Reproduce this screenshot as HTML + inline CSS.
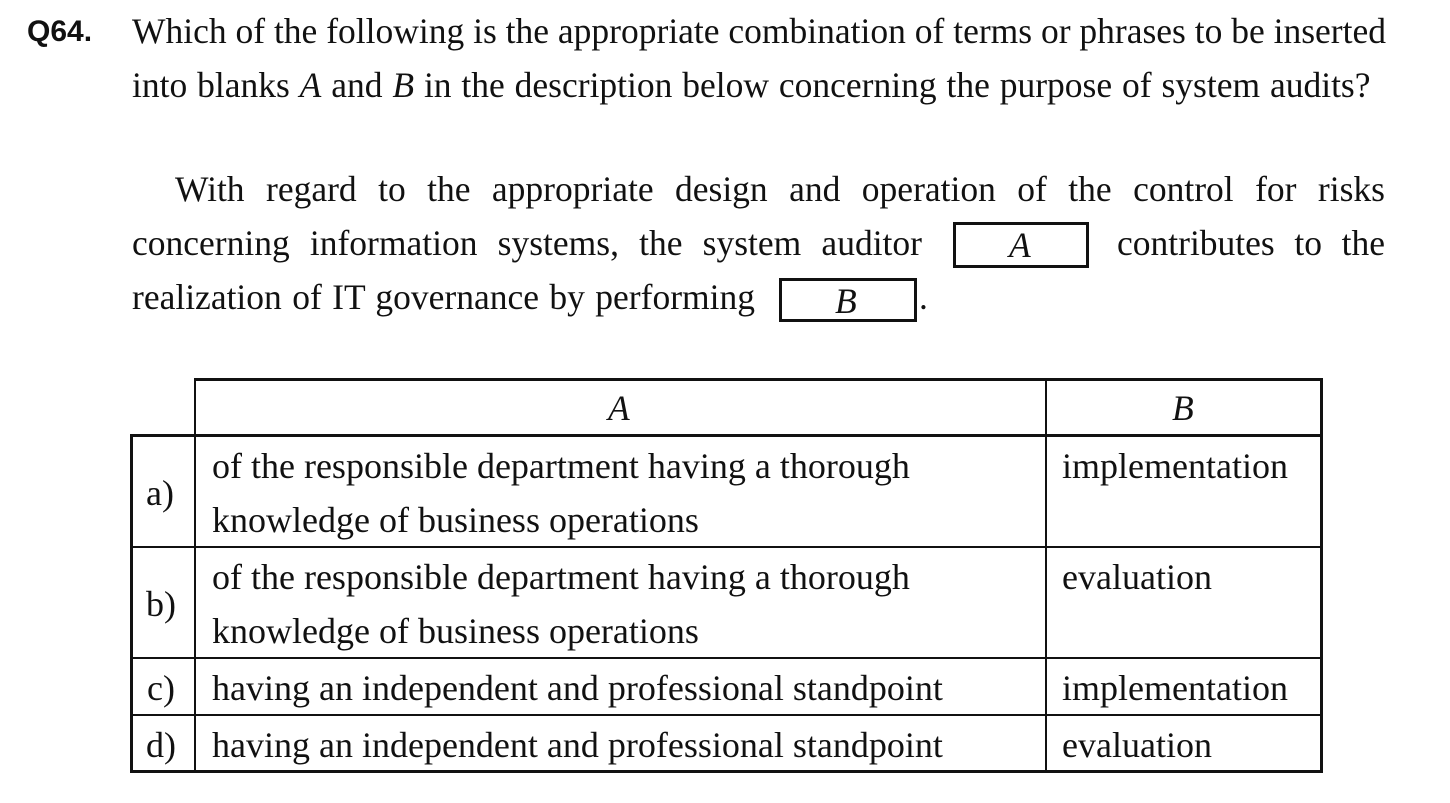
<!DOCTYPE html>
<html><head><style>
body{margin:0;width:1450px;height:803px;background:#fff;position:relative;overflow:hidden;font-family:"Liberation Serif",serif;font-size:35.5px;color:#111}
.a{position:absolute;white-space:nowrap;line-height:1}
.t{font-size:36px}
.h{position:absolute;background:#111}
.j{position:absolute;line-height:1;text-align:justify;text-align-last:justify}
</style></head><body>
<div class="a" style="left:27px;top:17px;font-family:'Liberation Sans',sans-serif;font-weight:bold;font-size:30px">Q64.</div>
<div class="a" style="left:132px;top:14px">Which of the following is the appropriate combination of terms or phrases to be inserted</div>
<div class="a" style="left:132px;top:68px;word-spacing:1px">into blanks <i>A</i> and <i>B</i> in the description below concerning the purpose of system audits?</div>

<div class="j" style="left:175px;top:172px;width:1210px">With regard to the appropriate design and operation of the control for risks</div>
<div class="j" style="left:132px;top:226px;width:790px">concerning information systems, the system auditor</div>
<div style="position:absolute;left:953px;top:222px;width:130px;height:40px;border:3px solid #111"></div>
<div class="a" style="left:1009px;top:228px"><i>A</i></div>
<div class="j" style="left:1117px;top:226px;width:268px">contributes to the</div>
<div class="j" style="left:132px;top:280px;width:623px">realization of IT governance by performing</div>
<div style="position:absolute;left:779px;top:278px;width:132px;height:38px;border:3px solid #111"></div>
<div class="a" style="left:835px;top:284px"><i>B</i></div>
<div class="a" style="left:919px;top:280px">.</div>

<div class="h" style="left:194px;top:378px;width:1129px;height:3px"></div>
<div class="h" style="left:130px;top:434px;width:1193px;height:3px"></div>
<div class="h" style="left:130px;top:546px;width:1193px;height:2px"></div>
<div class="h" style="left:130px;top:657px;width:1193px;height:2px"></div>
<div class="h" style="left:130px;top:714px;width:1193px;height:2px"></div>
<div class="h" style="left:130px;top:770px;width:1193px;height:3px"></div>
<div class="h" style="left:130px;top:434px;width:3px;height:339px"></div>
<div class="h" style="left:194px;top:378px;width:2px;height:395px"></div>
<div class="h" style="left:1045px;top:378px;width:2px;height:395px"></div>
<div class="h" style="left:1320px;top:378px;width:3px;height:395px"></div>

<div class="a" style="left:608px;top:391px"><i>A</i></div>
<div class="a" style="left:1172px;top:391px"><i>B</i></div>

<div class="a t" style="left:146px;top:475px">a)</div>
<div class="a t" style="left:212px;top:448px">of the responsible department having a thorough</div>
<div class="a t" style="left:212px;top:502px">knowledge of business operations</div>
<div class="a t" style="left:1062px;top:448px">implementation</div>

<div class="a t" style="left:146px;top:586px">b)</div>
<div class="a t" style="left:212px;top:559px">of the responsible department having a thorough</div>
<div class="a t" style="left:212px;top:613px">knowledge of business operations</div>
<div class="a t" style="left:1062px;top:559px">evaluation</div>

<div class="a t" style="left:147px;top:670px">c)</div>
<div class="a t" style="left:212px;top:670px">having an independent and professional standpoint</div>
<div class="a t" style="left:1062px;top:670px">implementation</div>

<div class="a t" style="left:146px;top:727px">d)</div>
<div class="a t" style="left:212px;top:727px">having an independent and professional standpoint</div>
<div class="a t" style="left:1062px;top:727px">evaluation</div>
</body></html>
